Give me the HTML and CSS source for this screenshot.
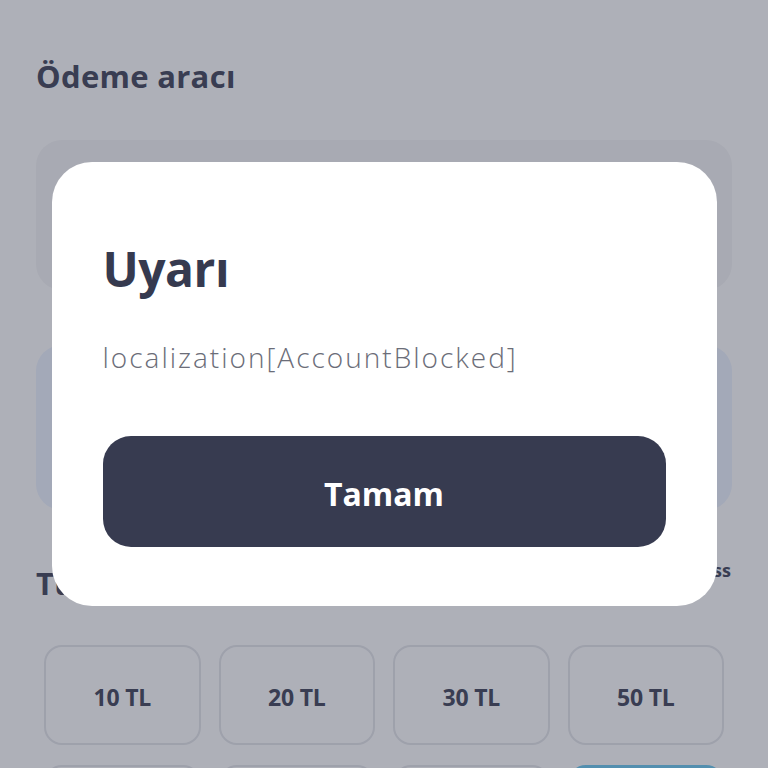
FILE: index.html
```html
<!DOCTYPE html>
<html lang="tr">
<head>
    <meta charset="UTF-8">
    <meta name="viewport" content="width=device-width, initial-scale=1.0">
    <title>Ödeme</title>
    <link rel="stylesheet" href="styles.css">
</head>
<body>
    <div class="page">
        <h2 class="section-title">Ödeme aracı</h2>

        <div class="method-card"></div>
        <div class="method-card blue"></div>

        <div class="amount-head">
            <h2 class="section-title">Tutar</h2>
            <span class="amount-note">Express</span>
        </div>

        <div class="amounts">
            <div class="amount">10 TL</div>
            <div class="amount">20 TL</div>
            <div class="amount">30 TL</div>
            <div class="amount">50 TL</div>
            <div class="amount"></div>
            <div class="amount"></div>
            <div class="amount"></div>
            <div class="amount selected"></div>
        </div>
    </div>

    <div class="overlay">
        <div class="modal">
            <h1 class="modal-title">Uyarı</h1>
            <p class="modal-text">localization[AccountBlocked]</p>
            <button class="modal-btn">Tamam</button>
        </div>
    </div>
</body>
</html>
```

FILE: styles.css
```css
body {
    margin: 0;
    background: #fff;
    font-family: "Open Sans", "Noto Sans", sans-serif;
    color: #4c4f63;
    overflow: hidden;
}
.page {
    padding: 0 36px;
}
.section-title {
    font-size: 31px;
    font-weight: 700;
    margin: 0;
    line-height: 36px;
    letter-spacing: 0.3px;
    color: #4c4f63;
}
.page > .section-title {
    padding-top: 58px;
}
.method-card {
    background: #f6f6f7;
    border-radius: 26px;
    height: 150px;
    margin-top: 46px;
}
.method-card.blue {
    background: #eef4ff;
    height: 165px;
    margin-top: 55px;
}
.amount-head {
    display: flex;
    justify-content: space-between;
    align-items: flex-start;
    margin-top: 55px;
}
.amount-note {
    font-size: 18px;
    line-height: 22px;
    font-weight: 700;
    margin-top: -6px;
    margin-right: 1px;
}
.amounts {
    display: grid;
    grid-template-columns: repeat(4, 1fr);
    gap: 20px 18px;
    padding: 0 8px;
    margin-top: 44px;
}
.amount {
    padding-top: 4px;
    box-sizing: border-box;
    height: 100px;
    border: 2px solid #e7e8ec;
    border-radius: 18px;
    display: flex;
    align-items: center;
    justify-content: center;
    font-size: 23px;
    font-weight: 700;
    letter-spacing: -0.2px;
}
.amount.selected {
    background: #74cdf2;
    border-color: #74cdf2;
}
.overlay {
    position: fixed;
    inset: 0;
    background: rgba(24, 29, 52, 0.35);
    display: flex;
    align-items: center;
    justify-content: center;
}
.modal {
    width: 665px;
    box-sizing: border-box;
    background: #fff;
    border-radius: 40px;
    padding: 79px 51px 59px 51px;
}
.modal-title {
    margin: 0;
    font-size: 48px;
    line-height: 56px;
    font-weight: 700;
    letter-spacing: -0.5px;
    color: #363a4f;
}
.modal-text {
    margin: 42px 0 0;
    font-size: 28px;
    line-height: 36px;
    font-weight: 300;
    letter-spacing: 2px;
    color: #6b6d78;
}
.modal-btn {
    display: block;
    width: 100%;
    height: 111px;
    margin-top: 61px;
    padding-top: 5px;
    border: none;
    border-radius: 28px;
    background: #373b50;
    color: #fff;
    font-family: inherit;
    font-size: 32px;
    font-weight: 700;
    cursor: pointer;
}
```
